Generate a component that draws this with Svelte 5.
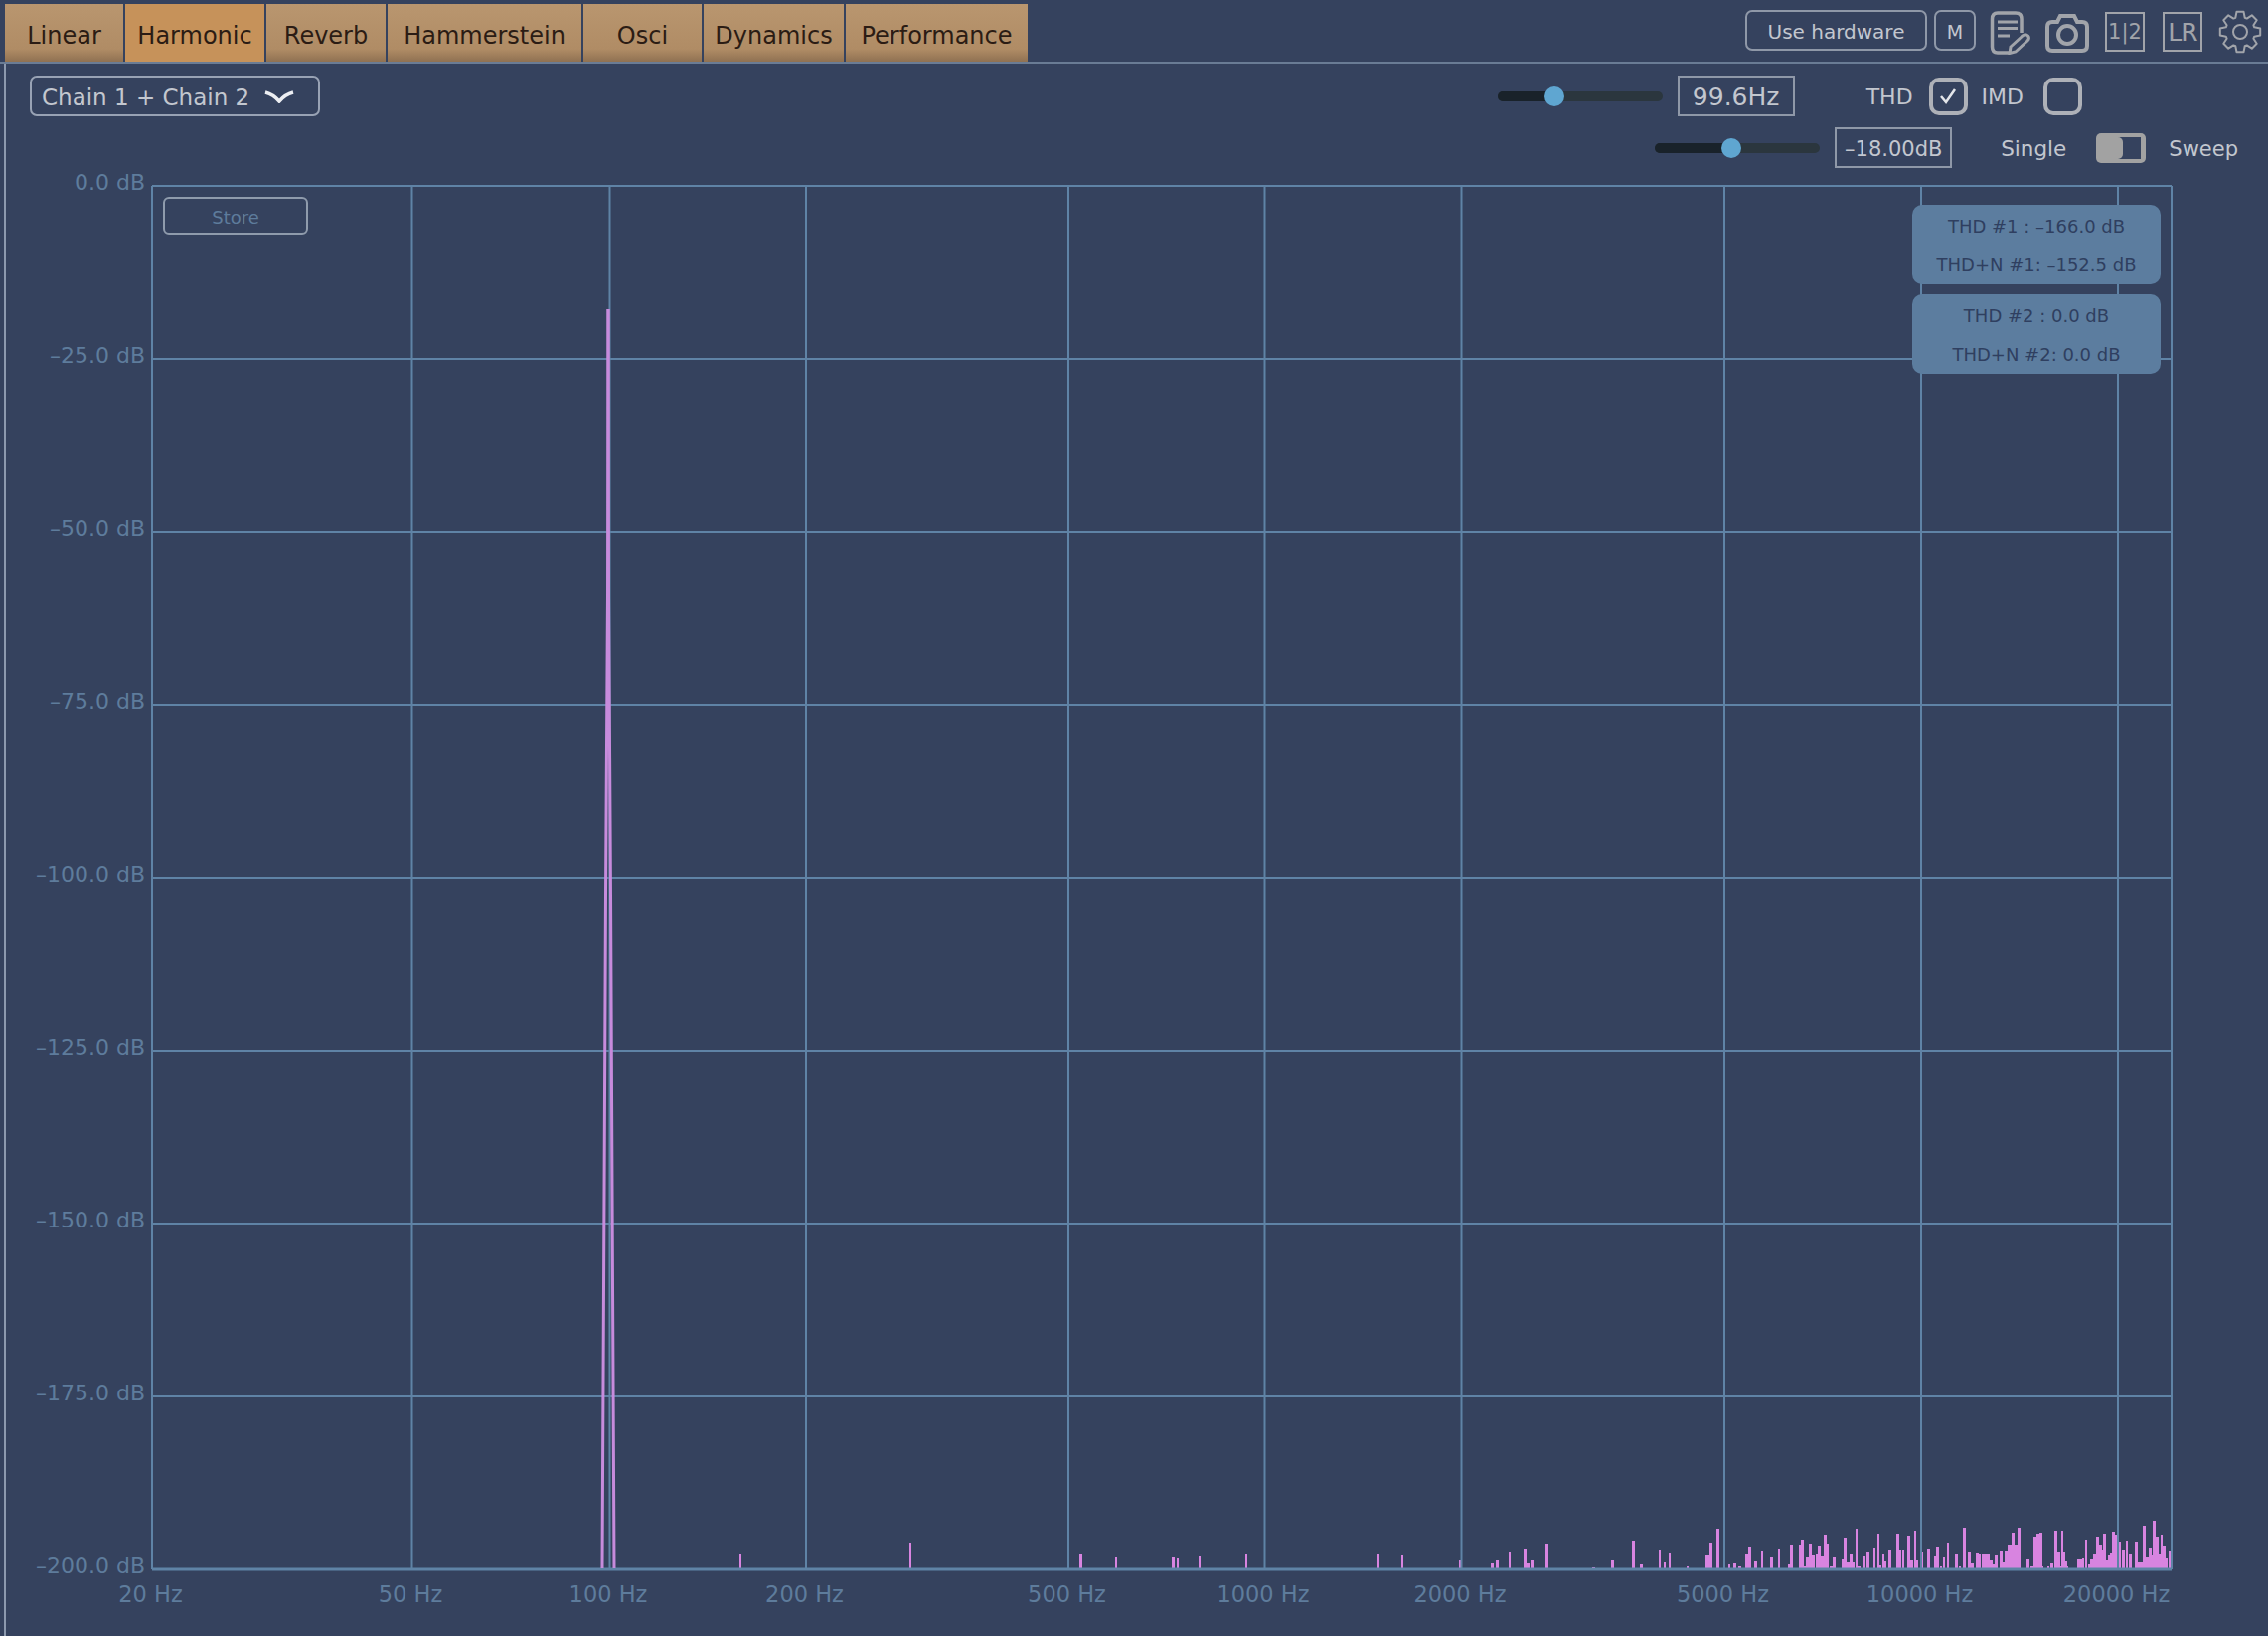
<script>
  const tabs = ['Linear', 'Harmonic', 'Reverb', 'Hammerstein', 'Osci', 'Dynamics', 'Performance'];
  const tabWidths = [119, 140, 120, 195, 119, 141, 183];

  // plot geometry, in page pixels
  const left = 153, right = 2185, top = 187, bottom = 1579;
  const freqs = [
    [20, 153], [50, 414.5], [100, 613.5], [200, 811], [500, 1075], [1000, 1272.5],
    [2000, 1470.5], [5000, 1735], [10000, 1933], [20000, 2131]
  ];
  const levels = ['0.0', '–25.0', '–50.0', '–75.0', '–100.0', '–125.0', '–150.0', '–175.0', '–200.0'];
  const rowH = (bottom - top) / 8;

  // x, height, width
  const bars = [
    [744,15],[915,27],[1086,16,3],[1122,12],[1179,12,3],[1184,11],[1206,13],[1253,15],[1386,16],[1410,14],
    [1468,9,3],[1500,6,3],[1505,9,3],[1518,18],[1533,21,3],[1536,6,3],[1540,9,3],[1555,26,3],[1561,1,3],[1602,2,3],[1621,9,3],
    [1642,29,3],[1650,5,3],[1669,20,2],[1674,7],[1679,17],[1697,3],[1716,14,4],[1720,27,3],[1727,41,3],
    [1739,5],[1744,6,3],[1749,3,3],[1756,15,3],[1759,23,3],[1765,8,3],[1772,19],[1781,12,3],[1789,21,2],[1801,25,3],
    [1799,5],[1810,25,4],[1812,30,3],[1815,3,3],[1817,12,3],[1820,26,3],[1823,14,3],[1827,15,3],[1829,24,3],[1832,13,3],
    [1835,35,3],[1838,26,2],[1841,3,3],[1844,12,3],[1853,10,3],[1855,32,3],[1858,7,3],[1861,16,3],[1863,7,3],[1867,41,2],
    [1869,3,3],[1875,13,2],[1878,18,3],[1885,22,2],[1889,36,2],[1891,4,2],[1894,15,2],[1896,8,2],[1900,20,3],[1908,36,3],
    [1911,20,2],[1914,20,2],[1919,34,3],[1922,9,3],[1926,39,2],[1928,9,2],[1932,18,3],[1939,21,3],[1946,13,3],[1948,23,3],
    [1952,3,2],[1955,12,2],[1959,27,2],[1967,15,3],[1971,3,2],[1975,42,3],[1980,18,3],[1983,6,3],[1988,17,3],[1991,16,2],
    [1994,16,5],[1997,16,3],[2000,15,2],[2002,9,3],[2005,5,2],[2007,14,3],[2012,19,3],[2014,7,3],[2017,19,3],[2020,25,4],
    [2024,37,3],[2027,25,3],[2030,42,3],[2039,10,3],[2043,3,4],[2046,33,3],[2049,36,3],[2052,37,3],[2047,3,9],[2060,3,2],
    [2063,6,3],[2067,39,3],[2070,18,3],[2074,39,2],[2076,18,2],[2078,8,2],[2072,3,9],[2090,10,4],[2093,10,2],[2095,11,2],
    [2098,30,2],[2101,5,2],[2103,10,3],[2106,16,3],[2109,33,3],[2112,25,3],[2114,20,2],[2116,36,3],[2119,9,2],[2121,14,2],
    [2123,17,3],[2125,38,3],[2128,35,3],[2131,10,2],[2132,28,2],[2135,20,3],[2139,29,2],[2142,15,3],[2148,28,3],[2151,7,2],
    [2153,7,3],[2156,44,3],[2159,12,3],[2162,22,3],[2164,14,2],[2166,49,3],[2169,33,3],[2172,15,2],[2174,35,2],[2176,24,3],
    [2179,11,2],[2182,19,3]
  ];

  // eight-toothed gear outline around 0,0
  function gearPath(r1, r2) {
    let d = '';
    for (let i = 0; i < 8; i++) {
      const a = (i * Math.PI) / 4;
      const pts = [[r1, -0.32], [r2, -0.17], [r2, 0.17], [r1, 0.32]];
      for (const [r, o] of pts) {
        const x = (r * Math.cos(a + o)).toFixed(1), y = (r * Math.sin(a + o)).toFixed(1);
        d += (d ? 'L' : 'M') + x + ' ' + y;
      }
    }
    return d + 'Z';
  }
</script>

<div class="app">
  <header class="topbar">
    <nav class="tabs">
      {#each tabs as t, i}
        <button class="tab" class:active={i === 1} style="width:{tabWidths[i]}px">{t}</button>
      {/each}
    </nav>
    <div class="tools">
      <button class="hw">Use hardware</button>
      <button class="mono">M</button>
      <svg class="note" width="41" height="44" viewBox="0 0 41 44" fill="none" stroke="#a1a4aa">
        <path d="M19 42H8Q2.500 42 2.500 36V8Q2.500 2 8 2H26Q32 2 32 8V22" stroke-width="3.500" />
        <path d="M8 11H28M8 17.500H28M8 25H20" stroke-width="3" />
        <path d="M21 36L33 25Q36 22.500 38.500 25Q40.500 27.500 38 30L26 41L20 42.500Z" stroke-width="3" />
      </svg>
      <svg class="camera" width="44" height="40" viewBox="0 0 44 40" fill="none" stroke="#a1a4aa" stroke-width="4">
        <path d="M7 9H12L15 3H29L32 9H37Q42 9 42 14V33Q42 38 37 38H7Q2 38 2 33V14Q2 9 7 9Z" />
        <circle cx="22" cy="22" r="9" />
      </svg>
      <div class="box ch">1|2</div>
      <div class="box lr">LR</div>
      <svg class="gear" width="44" height="44" viewBox="-22 -22 44 44" fill="none" stroke="#a1a4aa" stroke-width="2">
        <path d={gearPath(15, 20.500)} stroke-linejoin="round" />
        <circle r="7" />
      </svg>
    </div>
  </header>

  <main class="main">
    <div class="controls">
      <div class="row first">
        <button class="select">
          Chain 1 + Chain 2
          <svg width="32" height="13" viewBox="0 0 32 13" fill="none" stroke="#eceef2" stroke-width="3.500">
            <path d="M2 2Q10 4 16 11Q22 4 30 2" />
          </svg>
        </button>
        <div class="group">
          <div class="slider"><span class="fill" style="width:57px"></span><span class="thumb" style="left:47px"></span></div>
          <div class="value big">99.6Hz</div>
          <span class="lbl thd">THD</span>
          <span class="check">
            <svg width="20" height="18" viewBox="0 0 20 18" fill="none" stroke="#e4e6ea" stroke-width="2.500"><path d="M3 9L8 15L17 2" /></svg>
          </span>
          <span class="lbl imd">IMD</span>
          <span class="check"></span>
        </div>
      </div>
      <div class="row second">
        <div class="slider"><span class="fill" style="width:76px"></span><span class="thumb" style="left:67px"></span></div>
        <div class="value db">–18.00dB</div>
        <span class="lbl single">Single</span>
        <span class="toggle"><span class="hole"><span class="knob"></span></span></span>
        <span class="lbl sweep">Sweep</span>
      </div>
    </div>

    <div class="plot">
      <svg width="2276" height="1477" viewBox="6 169 2276 1477">
        {#each bars as [x, h, w]}
          <rect {x} y={bottom - h} width={w || 2} height={h} fill="#d884e0" />
        {/each}
        <g stroke="#5f83a6" stroke-width="2">
          {#each freqs as [, x]}
            <line x1={x} x2={x} y1={top} y2={bottom} />
          {/each}
          <line x1={right} x2={right} y1={top} y2={bottom} />
          {#each levels as _, i}
            <line x1={left} x2={right} y1={top + i * rowH} y2={top + i * rowH} />
          {/each}
          <line x1={left} x2={right} y1={bottom} y2={bottom} stroke-width="3" />
        </g>
        <g fill="none" stroke="#c78bdc" stroke-width="3">
          <path d="M612 311L611.500 600L609.500 900L608 1200L606 1578" />
          <path d="M612 311L612.500 600L614.500 900L616 1200L618 1578" />
        </g>
        <g class="axis">
          {#each levels as l, i}
            <text x="146" y={top + i * rowH + 4} text-anchor="end">{l} dB</text>
          {/each}
          {#each freqs as [f, x]}
            <text class="fq" x={x - 1.5} y="1611.500" text-anchor="middle">{f} Hz</text>
          {/each}
        </g>
      </svg>

      <button class="store">Store</button>
      <div class="readouts">
        <div class="readout"><span>THD #1 : –166.0 dB</span><span>THD+N #1: –152.5 dB</span></div>
        <div class="readout"><span>THD #2 : 0.0 dB</span><span>THD+N #2: 0.0 dB</span></div>
      </div>
    </div>
  </main>
</div>

<style>
  :global(body) { margin: 0; background: #35425e; }
  .app {
    width: 2282px; height: 1646px; overflow: hidden; background: #35425e;
    font-family: "DejaVu Sans", sans-serif; color: #c3c7cf;
  }
  button { font: inherit; color: inherit; background: none; padding: 0; margin: 0; }

  .topbar {
    box-sizing: border-box; height: 64px; display: flex; justify-content: space-between;
    border-bottom: 2px solid #6a7c95; padding-left: 5px;
  }
  .tabs { display: flex; gap: 2px; padding-top: 4px; }
  .tab {
    box-sizing: border-box; height: 58px; border: 0; padding-top: 5px; font-size: 24px; color: #2b1c14;
    background: linear-gradient(#b9966f, #b08c65 78%, #8f7152);
  }
  .tab.active { background: #c6925a; }

  .tools { display: flex; align-items: flex-start; padding: 10px 6px 0 0; }
  .hw, .mono { height: 41px; border: 2px solid #8f98a8; border-radius: 7px; box-sizing: border-box; padding-top: 2px; }
  .hw { width: 183px; font-size: 20px; }
  .mono { width: 42px; margin-left: 7px; font-size: 19px; }
  .note { margin: 1px 0 0 14px; }
  .camera { margin: 3px 0 0 15px; }
  .box {
    box-sizing: border-box; width: 40px; height: 40px; margin-top: 2px; border: 2.500px solid #a1a4aa;
    color: #a1a4aa; display: flex; align-items: center; justify-content: center;
  }
  .ch { margin-left: 16px; font-size: 21px; }
  .lr { margin-left: 18px; font-size: 25px; letter-spacing: -1px; }
  .gear { margin: 0 0 0 16px; }

  .main { margin-left: 4px; border-left: 2px solid #8c99ae; height: 1582px; }
  .controls { height: 105px; box-sizing: border-box; padding-top: 12px; }
  .row { display: flex; align-items: center; height: 41px; }
  .first { justify-content: space-between; padding: 0 187px 0 24px; }
  .second { justify-content: flex-end; padding-right: 30px; margin-top: 11px; }
  .group { display: flex; align-items: center; }

  .select {
    box-sizing: border-box; width: 292px; height: 41px; border: 2px solid #98a2b4; border-radius: 7px;
    font-size: 23px; display: flex; align-items: center; gap: 14px; padding: 2px 0 0 10px; white-space: nowrap;
  }
  .slider { position: relative; width: 166px; height: 10px; border-radius: 5px; background: #2b363e; }
  .fill { display: block; height: 10px; border-radius: 5px 0 0 5px; background: #19222a; }
  .thumb { position: absolute; top: -5px; width: 20px; height: 20px; border-radius: 50%; background: #5fa6d1; }
  .value {
    box-sizing: border-box; width: 117px; height: 41px; margin-left: 15px; padding-top: 2px; border: 2px solid #8f98a8;
    display: flex; align-items: center; justify-content: center; font-size: 21px;
  }
  .value.big { font-size: 25px; width: 118px; }
  .value.db { width: 118px; padding-top: 3px; }
  .lbl { font-size: 22px; padding-top: 2px; }
  .thd { margin-left: 72px; }
  .imd { margin: 0 20px 0 14px; }
  .single { margin-left: 49px; font-size: 21.500px; }
  .sweep { margin-left: 23px; font-size: 21px; }
  .check {
    box-sizing: border-box; width: 39px; height: 38px; margin-left: 16px; border: 4px solid #aeb1b8; border-radius: 10px;
    display: flex; align-items: center; justify-content: center;
  }
  .imd + .check { margin-left: 0; }
  .toggle { display: flex; box-sizing: border-box; width: 50px; height: 30px; margin-left: 30px; border-radius: 5px; background: #a2a2a2; }
  .hole { display: block; width: 23px; margin: 4px 5px 4px auto; background: #35425e; }
  .knob { display: block; width: 5px; height: 100%; border-radius: 0 8px 8px 0; background: #a2a2a2; }

  .plot { position: relative; }
  .plot svg { display: block; }
  .axis text { font-size: 22px; fill: #5e7c9c; }
  .axis text.fq { font-size: 22.500px; }
  .store {
    position: absolute; left: 158px; top: 29px; box-sizing: border-box; width: 146px; height: 38px; padding-top: 2px;
    border: 2px solid #8f9bac; border-radius: 6px; font-size: 18px; color: #5e7c9c;
  }
  .readouts { position: absolute; left: 1918px; top: 37px; width: 250px; display: flex; flex-direction: column; gap: 10px; }
  .readout {
    box-sizing: border-box; height: 80px; padding-top: 2px; border-radius: 10px; background: #5c7d9f; color: #2f3f60; font-size: 18px;
    display: flex; flex-direction: column; align-items: center; justify-content: space-around;
  }
</style>
